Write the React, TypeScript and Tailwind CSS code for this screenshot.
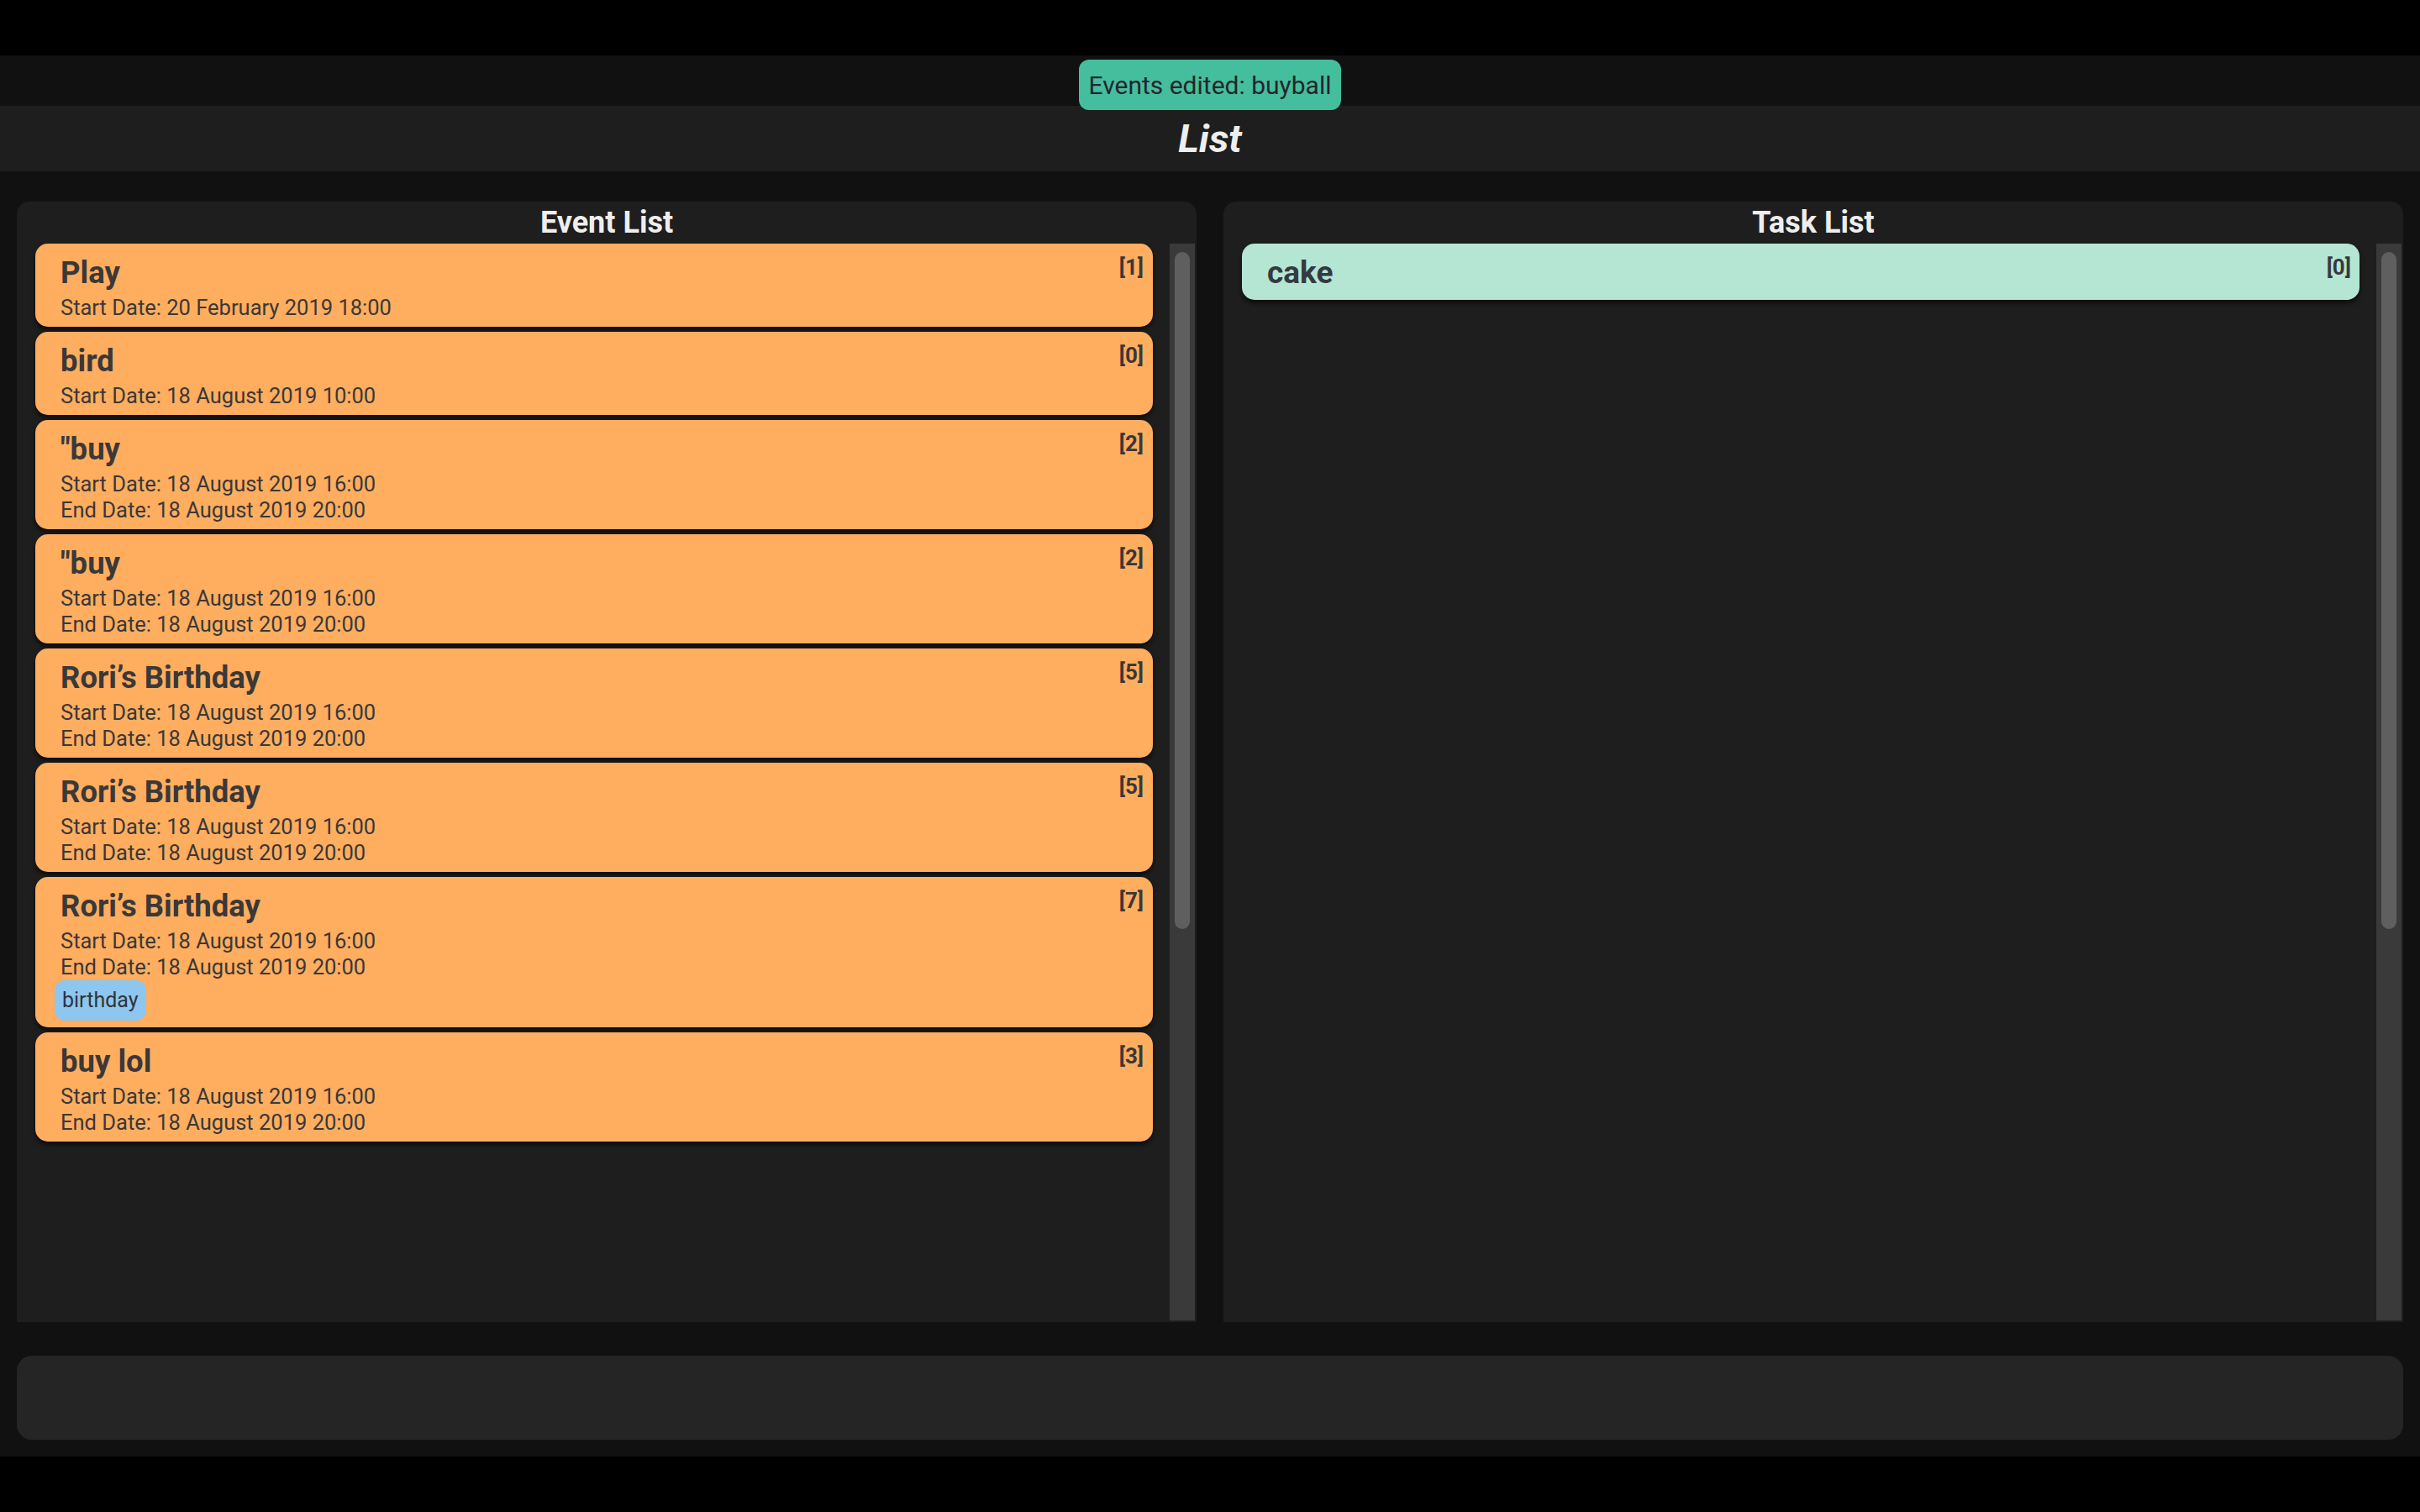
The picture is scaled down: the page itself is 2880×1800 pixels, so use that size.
import React from "react";

type Ev = { name: string; start: string; end?: string; idx: number; tags?: string[] };

const events: Ev[] = [
  { name: "Play", start: "20 February 2019 18:00", idx: 1 },
  { name: "bird", start: "18 August 2019 10:00", idx: 0 },
  { name: "\"buy", start: "18 August 2019 16:00", end: "18 August 2019 20:00", idx: 2 },
  { name: "\"buy", start: "18 August 2019 16:00", end: "18 August 2019 20:00", idx: 2 },
  { name: "Rori\u2019s Birthday", start: "18 August 2019 16:00", end: "18 August 2019 20:00", idx: 5 },
  { name: "Rori\u2019s Birthday", start: "18 August 2019 16:00", end: "18 August 2019 20:00", idx: 5 },
  { name: "Rori\u2019s Birthday", start: "18 August 2019 16:00", end: "18 August 2019 20:00", idx: 7, tags: ["birthday"] },
  { name: "buy lol", start: "18 August 2019 16:00", end: "18 August 2019 20:00", idx: 3 },
];

function EventCard({ ev }: { ev: Ev }) {
  return (
    <div className="relative rounded-[15px] bg-[#ffad5f] pl-[30px] pr-[60px] pt-[11px] pb-[7px] text-[#3a3838] shadow-[0_4px_5px_rgba(0,0,0,0.6)]">
      <div className="text-[36.5px] font-bold leading-[48px]">{ev.name}</div>
      <div className="mt-[2px] text-[25.5px] leading-[31px]">Start Date: {ev.start}</div>
      {ev.end && <div className="text-[25.5px] leading-[31px]">End Date: {ev.end}</div>}
      {ev.tags && (
        <div className="-ml-[7px] mb-[1px] flex gap-2">
          {ev.tags.map((t) => (
            <span
              key={t}
              className="flex h-[48px] items-center rounded-[12px] bg-[#8dc6ee] px-[9px] text-[25px] text-[#2e3440]"
            >
              {t}
            </span>
          ))}
        </div>
      )}
      <span className="absolute right-[11px] top-[13px] text-[26px] font-bold leading-[30px]">[{ev.idx}]</span>
    </div>
  );
}

function Scrollbar() {
  return (
    <div className="ml-[20px] w-[30px] shrink-0 bg-[#3a3a3a] px-[6px] pt-[10px]">
      <div className="h-[806px] rounded-[10px] bg-[#5f5f5f]" />
    </div>
  );
}

function Panel({ title, children }: { title: string; children: React.ReactNode }) {
  return (
    <div className="flex min-h-0 flex-col rounded-t-[15px] bg-[#1e1e1e]">
      <div className="h-[50px] text-center text-[36px] font-bold leading-[50px] text-[#eeeeee]">{title}</div>
      <div className="flex min-h-0 flex-1 pb-[2px] pl-[22px] pr-[2px]">
        <div className="flex min-w-0 flex-1 flex-col gap-[6px]">{children}</div>
        <Scrollbar />
      </div>
    </div>
  );
}

export default function App() {
  return (
    <div className="flex h-screen w-full flex-col bg-black font-['Roboto',sans-serif]">
      <div className="h-[66px] shrink-0 bg-black" />
      <div className="flex h-[60px] shrink-0 justify-center bg-[#111111] pt-[5px]">
        <div className="relative z-10 flex h-[60px] items-center rounded-[12px] bg-[#45be9e] px-[11px] text-[30px] text-[#23262c]">
          Events edited: buyball
        </div>
      </div>
      <div className="h-[78px] shrink-0 bg-[#1e1e1e] text-center text-[47px] font-bold italic leading-[78px] text-[#eeeeee]">
        List
      </div>
      <div className="flex min-h-0 flex-1 flex-col bg-[#111111] px-[20px] pb-[20px] pt-[36px]">
        <div className="grid min-h-0 flex-1 grid-cols-2 gap-[32px]">
          <Panel title="Event List">
            {events.map((ev, i) => (
              <EventCard key={i} ev={ev} />
            ))}
          </Panel>
          <Panel title="Task List">
            <div className="relative rounded-[15px] bg-[#b5e6d4] pl-[30px] pr-[60px] pt-[11px] pb-[8px] text-[#353a40] shadow-[0_4px_5px_rgba(0,0,0,0.6)]">
              <div className="text-[37px] font-bold leading-[48px]">cake</div>
              <span className="absolute right-[10px] top-[13px] text-[26px] font-bold leading-[30px]">[0]</span>
            </div>
          </Panel>
        </div>
        <div className="mt-[40px] h-[100px] shrink-0 rounded-[18px] bg-[#252525]" />
      </div>
      <div className="h-[66px] shrink-0 bg-black" />
    </div>
  );
}
